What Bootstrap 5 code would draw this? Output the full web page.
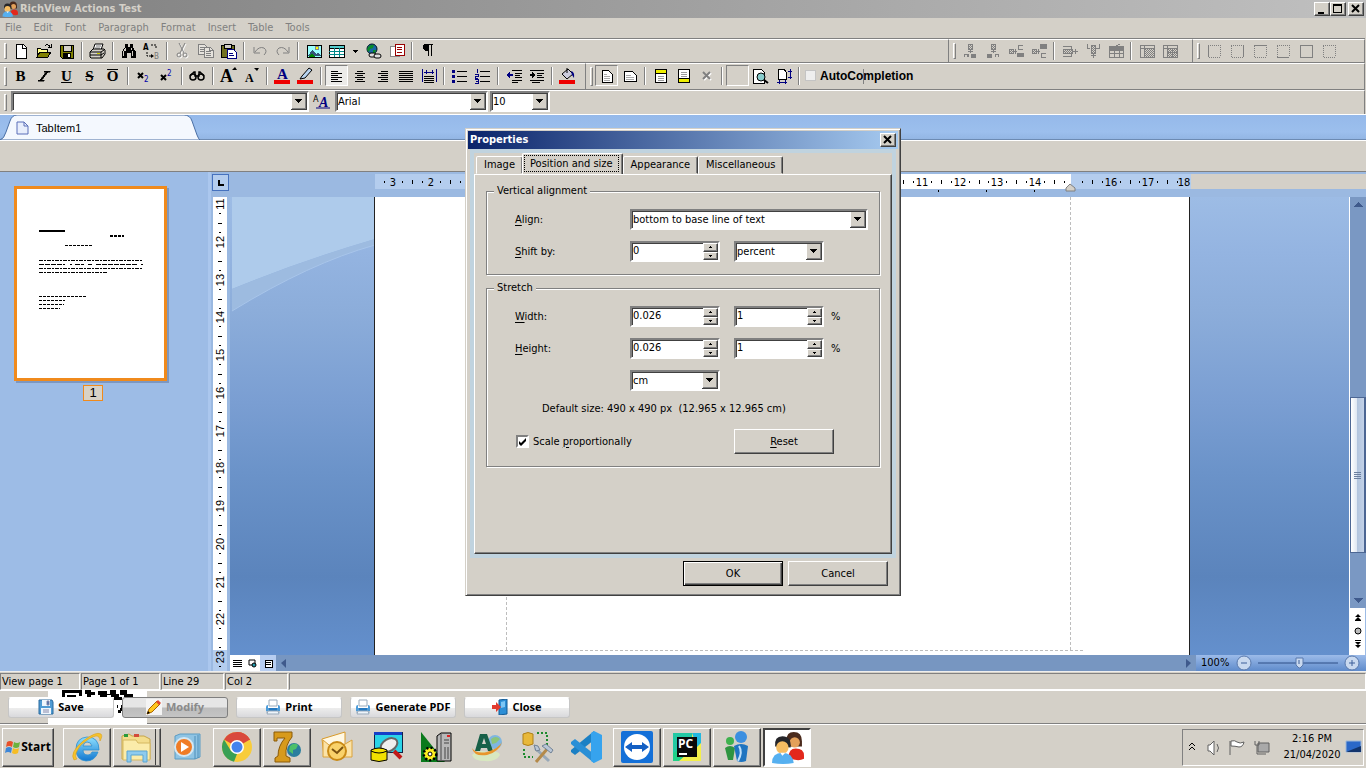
<!DOCTYPE html>
<html lang="en">
<head>
<meta charset="utf-8">
<meta name="viewport" content="width=device-width, initial-scale=1">
<title>RichView Actions Test</title>
<link href="https://cdn.jsdelivr.net/npm/bootstrap@5.3.0/dist/css/bootstrap.min.css" rel="stylesheet">
<style>
:root{--face:#d4d0c8;--shade:#808080;--dark:#404040}
html,body{height:100%}
body{font:11px/14px "DejaVu Sans Condensed","Noto Sans",sans-serif;color:#000;background:var(--face);overflow:hidden}
button,input,select{font:inherit;color:inherit;border-radius:0}
svg{display:block;flex:none}
.px{shape-rendering:crispEdges}
.raised{background:var(--face);border:1px solid;border-color:#fff var(--dark) var(--dark) #fff;box-shadow:inset -1px -1px var(--shade)}
.titlebar{height:18px;background:linear-gradient(90deg,#808080,#c0c0c0);color:#d4d0c8;font-weight:bold;padding:0 2px;gap:2px}
.winbtn{width:16px;height:14px;padding:0}
.menus{height:20px;gap:12px;padding-left:5px}
.menus a{color:#808080;text-decoration:none}
/* toolbars */
.band{border-top:1px solid var(--shade);margin-right:1px}
.strip{border-top:1px solid #fff;border-right:1px solid var(--shade);padding-left:9px;position:relative}
.strip::before{content:"";position:absolute;left:4px;top:3px;bottom:3px;width:3px;border:1px solid;border-color:#fff var(--shade) var(--shade) #fff}
.band1{height:24px}.band2{height:27px}.band3{height:25px}
.band2 .strip,.band3 .strip{padding-bottom:2px}
.cells{width:244px}.borders{width:172px}.formats{padding-right:6px}
.tool{width:23px;height:21px;padding:0;border:0;background:none;display:flex;align-items:center;justify-content:center;flex:none}
.tool svg{overflow:visible}
.tool.drop{width:14px}
.tool.down{border:1px solid;border-color:var(--shade) #fff #fff var(--shade);background:#ecebe8}
.tool.flat{background:var(--face)}
.vsep{width:2px;height:18px;margin:0 3px;border-left:1px solid var(--shade);border-right:1px solid #fff;flex:none}
.glyph{font-family:"Liberation Serif",serif;font-weight:bold;font-size:15px;line-height:16px}
.over{border-top:1px solid #000;line-height:12px}
.acheck{font:bold 12px/14px "Liberation Sans",sans-serif;position:relative}
.acheck::after{content:"";position:absolute;left:60px;top:0;width:1px;height:15px;background:#808080}
.acheck input{appearance:none;width:11px;height:11px;margin:0 4px 0 2px;border:1px solid #c4c4c4;background:#eee}
.stylebox{width:298px;margin-left:2px}.aabtn{margin:0 2px 0 1px}.fontbox{width:153px}.sizebox{width:60px;margin-left:2px}
/* sunken fields */
.well{border:2px solid;border-color:var(--shade) #fff #fff var(--shade);outline:0;background-color:#fff;box-shadow:inset 1px 1px var(--dark);height:21px}
select.well{appearance:none;padding:0 20px 0 1px;background-repeat:no-repeat;background-position:right 0 center;background-image:url("data:image/svg+xml,%3Csvg xmlns='http://www.w3.org/2000/svg' width='16' height='17' shape-rendering='crispEdges'%3E%3Crect width='16' height='17' fill='%23404040'/%3E%3Crect width='15' height='16' fill='%23fff'/%3E%3Crect x='1' y='1' width='14' height='15' fill='%23808080'/%3E%3Crect x='1' y='1' width='13' height='14' fill='%23d4d0c8'/%3E%3Cpath d='M4 6h7v1h-1v1h-1v1h-1v1h-1v-1h-1v-1h-1v-1h-1z'/%3E%3C/svg%3E")}
.spin input{border:0;background:none;outline:0;min-width:0;padding:0 0 2px 1px}
.spin button{width:15px;height:8px;flex:1;padding:0;display:flex;align-items:center;justify-content:center}
/* document tabs */
.doctabs{height:26px;background:linear-gradient(#95b9ea,#9cbfed 70%,#93b6e4);border-top:1px solid #fff;border-bottom:1px solid #6d8bb3}
.doctab{font:11px/14px "Liberation Sans",sans-serif;width:200px;height:25px;background:none;border:0;padding:0 0 0 16px;gap:6px;position:relative}
.doctab>svg:first-child{position:absolute;left:0;top:0}
.doctab>*{position:relative}
.blank{height:32px;border-top:1px solid #fff;border-bottom:1px solid var(--shade)}
/* work area */
.work{background:#9dbce6;min-height:0}
.pages{width:208px}
.split{width:3px;background:#abc7ee}
.thumb{border:3px solid #f08a1c;width:153px;height:195px;margin:14px 0 0 14px;background:#fff;box-shadow:2px 2px #7d97c0;padding:0}
.pageno{border:1px solid #f08a1c;background:#d8d2c6;width:20px;height:16px;margin:4px 0 0 83px;font:13px/14px "Liberation Sans",sans-serif;text-align:center}
.rulercol{width:19px;background:#9bb9e1}
.corner{width:17px;height:17px;margin:2px 0 6px 1px;border:1px solid #4672be;background:#b4cdee;padding:0;display:flex;align-items:center;justify-content:center}
.toprule{height:25px;padding:2px 0 0 145px;background:#9bb9e1}
.toprest{height:15px;background:var(--face)}
.canvas{min-height:0;background:linear-gradient(#9dbce5 0,#94b4e1 12%,#8cadda 25%,#7a9ed2 45%,#6b93c9 60%,#5b84bc 83%,#6490cd 100%);position:relative}
.swoosh{position:absolute;left:0;top:0}
.paper{width:816px;margin-left:144px;background:#fff;border-left:1px solid #222;border-right:1px solid #222;position:relative}
.textarea-guides{margin-left:131px;width:565px;border:dashed #bdbdbd;border-width:0 1px}
.bottom-guide{margin-left:115px;width:593px;height:5px;border-top:1px dashed #bdbdbd}
.vbar{width:17px;border-left:1px solid #fff;background:#7a98c3}
.vbar button{border:0;padding:0;background:none;height:15px;width:16px;display:flex;align-items:center;justify-content:center}
.vthumb{height:156px;margin-top:185px;border:1px solid #4c6693;border-right-width:2px;background:linear-gradient(90deg,#fff,#dfe7f2 45%,#b3c5de 50%,#c3d2e8)}
.vnav{background:#fff;width:16px;height:47px}
.hbar{height:16px;background:#7796c1}
.views{width:46px;background:#fff}
.views button,.hbar .arr{border:0;padding:0;background:none;width:15px;height:16px;display:flex;align-items:center;justify-content:center}
.views button.cur{background:#b7cdf0;width:16px}
.zoomer{width:170px;background:linear-gradient(#9cbbe9,#5f8bcb);padding-left:5px}
.status{height:19px;padding-top:1px;border-top:1px solid #eee}
.status div{border:1px solid;border-color:var(--shade) #fff #fff var(--shade);height:17px;margin-right:1px;padding-left:1px;line-height:16px}
.status .s1{width:80px}.status .s2{width:79px}.status .s3{width:63px}
.actions{height:34px;border-top:1px solid #fff;border-bottom:1px solid var(--shade);padding:6px 8px 0;gap:8px;position:relative}
.actions>.qr{position:absolute;left:48px;top:-1px}
.act{width:106px;height:21px;border:1px solid #c6c6c6;border-top-color:#fff;border-radius:3px;background:linear-gradient(#fff 50%,#ececec 55%,#d9d9dc);padding:0 0 2px;font:bold 11px/14px "Open Sans",sans-serif;position:relative;display:flex;align-items:center;justify-content:center;gap:4px}
.act:disabled{background:linear-gradient(#e6e6e6 45%,#bdbdbd 55%,#c4c4c4);border-color:#7f7f7f;color:#8a8a8a}
.taskbar{height:44px;border-top:1px solid #fff;padding:2px 2px 1px}
.start{width:52px;height:39px;padding:0;font:bold 12px/14px "Open Sans",sans-serif;margin-right:9px}
.task{width:48px;height:39px;padding:0;margin-right:2px;display:flex;align-items:center;justify-content:center;border:0;background:none}
.task.raised{background:var(--face);border:1px solid;border-color:#fff var(--dark) var(--dark) #fff}
.task.stack{box-shadow:inset -1px -1px #808080,inset -4px 0 #d4d0c8,inset -5px 0 #404040}
.task.on{background:#fff;border:2px solid;border-color:var(--dark) #fff #fff var(--dark)}
.tray{border:1px solid;border-color:var(--shade) #fff #fff var(--shade);height:37px;width:182px;line-height:16px}
/* dialog */
.dlg{position:absolute;left:465px;top:128px;width:436px;background:var(--face);border:1px solid;border-color:#d4d0c8 #404040 #404040 #d4d0c8;box-shadow:inset 1px 1px #fff,inset -1px -1px #808080;padding:2px}
.dlgtitle{height:18px;background:linear-gradient(90deg,#0a246a,#a6caf0);color:#fff;font-weight:bold;padding:0 2px}
.sheet{border:4px solid #c0d3df;margin:0 2px}
.tabrow{height:21px;padding:0 2px}
.ptab{border:1px solid;border-color:#fff var(--dark) transparent #fff;box-shadow:inset -1px 0 var(--shade);background:var(--face);height:18px;padding:0 7px;border-radius:2px 2px 0 0}
.ptab.cur{height:21px;padding:0;z-index:1;border-bottom:0;margin-left:-1px}
.ptab.cur span{display:block;border:1px dotted #000;margin:1px 3px 2px 1px;padding:0 5px;height:17px;line-height:15px}
.tabpage{border:1px solid;border-color:#fff var(--dark) var(--dark) #fff;box-shadow:inset -1px -1px var(--shade);height:380px;padding:9px 10px 0 11px}
.group{border:1px solid #808080;box-shadow:1px 1px #fff,inset 1px 1px #fff;margin:0 1px 6px 0;padding:11px 0 12px 28px;display:grid;grid-template-columns:101px 90px 90px auto;column-gap:14px;row-gap:11px;align-items:center}
.group legend{float:none;width:auto;font-size:11px;line-height:14px;height:14px;margin:0 0 0 -21px;padding:0 3px;background:var(--face)}
.group .wide{grid-column:2/5;width:238px}
.group .unit{grid-column:2}
.group u,.pbtn u{text-underline-offset:2px}
.pct{margin-left:-7px}
.defsize{grid-column:1/5;padding-left:27px;height:16px}
.scale{grid-column:1/3}
.dlgfoot{gap:5px;padding:3px 10px 7px}
.pbtn{width:100px;height:25px;padding:0}
.group .pbtn{grid-column:3}
.pbtn.default{border:1px solid #000;box-shadow:inset 1px 1px #fff,inset -1px -1px #404040,inset -2px -2px #808080}
.tick{appearance:none;width:13px;height:13px;margin:0 4px 0 1px;border:2px solid;border-color:#808080 #fff #fff #808080;background:#fff url("data:image/svg+xml,%3Csvg xmlns='http://www.w3.org/2000/svg' width='9' height='9'%3E%3Cpath d='M1 4l2 2 5-5v3L3 9 1 7z'/%3E%3C/svg%3E") center/9px no-repeat}
</style>
</head>
<body class="d-flex flex-column">
<svg width="0" height="0" class="position-absolute">
 <defs>
  <linearGradient id="gb" x1="0" y1="0" x2="0" y2="1"><stop offset="0" stop-color="#8fe0ff"/><stop offset="1" stop-color="#1177d0"/></linearGradient>
  <symbol id="people" viewBox="0 0 32 32"><path d="M15 9q0-8 7-8 8 0 8 9v5H17z" fill="#4a2a1c"/><circle cx="23" cy="11" r="5" fill="#e3a05a"/><path d="M17 26q0-9 7-9 8 0 8 7v3q-6 3-15-1z" fill="#e2281c"/><path d="M4 15q-1-10 7-10 9 0 8 11z" fill="#26262a"/><circle cx="11" cy="16" r="6" fill="#f6bd62"/><path d="M1 31q0-10 10-10t11 10q-10 2-21 0z" fill="#56b0f0"/><path d="M9 21l2 3 3-3z" fill="#fff"/></symbol>
  <symbol id="printer" viewBox="0 0 16 16"><path d="M4 1h8v6H4z" fill="#fff" stroke="#9ab"/><path d="M1 8q0-2 2-2v3h10V6q2 0 2 2v4H1z" fill="#4c9bd8"/><path d="M1 12h14v2H1z" fill="#b9c7d4"/><path d="M4 9h8v3H4z" fill="#2679c0"/><path d="M3 12h10l1 3H2z" fill="#eef4fa" stroke="#9ab"/></symbol>
  <pattern id="dots" width="2" height="2" patternUnits="userSpaceOnUse"><path d="M0 0h1v1H0zM1 1h1v1H1z" fill="#808080"/></pattern>
 </defs>
</svg>

<header class="titlebar d-flex align-items-center flex-shrink-0">
 <svg width="16" height="16"><use href="#people"/></svg>
 <span class="flex-grow-1">RichView Actions Test</span>
 <div class="d-flex"><button class="winbtn raised" aria-label="Minimize"><svg class="px" width="14" height="12"><path d="M3 9h6v2H3z"/></svg></button>
 <button class="winbtn raised" aria-label="Maximize"><svg class="px" width="14" height="12"><path d="M2 1h9v9H2zM3 3v6h7V3z" fill-rule="evenodd"/></svg></button></div>
 <button class="winbtn raised" aria-label="Close"><svg width="14" height="12"><path d="M3 2l7 7M10 2L3 9" stroke="#000" stroke-width="2"/></svg></button>
</header>
<nav class="menus d-flex align-items-center flex-shrink-0">
 <a href="#">File</a><a href="#">Edit</a><a href="#">Font</a><a href="#">Paragraph</a><a href="#">Format</a><a href="#">Insert</a><a href="#">Table</a><a href="#">Tools</a>
</nav>

<div class="band band1 d-flex flex-shrink-0">
 <div class="strip d-flex align-items-center flex-grow-1">
  <button class="tool" aria-label="New"><svg class="px" width="16" height="16"><path d="M3 1h7l3 3v11H3z" fill="#fff" stroke="#000"/><path d="M9 1v4h4" fill="none" stroke="#000"/></svg></button>
  <button class="tool" aria-label="Open"><svg class="px" width="16" height="16"><path d="M1 13V5h3l1 1h6v3" fill="#ff8" stroke="#000"/><path d="M1 14l3-5h11l-3 5z" fill="#808000" stroke="#000"/><path d="M9 3q3-3 5 1M12 4h3V1" fill="none" stroke="#000"/></svg></button>
  <button class="tool" aria-label="Save"><svg class="px" width="16" height="16"><path d="M1 2h13v13H3l-2-2z" fill="#808000" stroke="#000"/><path d="M4 2h8v6H4z" fill="#d4d0c8" stroke="#000"/><path d="M4 10h8v5H4z"/><path d="M9 11h2v3H9z" fill="#fff"/></svg></button>
  <span class="vsep"></span>
  <button class="tool" aria-label="Print"><svg width="17" height="16"><path d="M6 1h8l-2 6H4z" fill="#fff" stroke="#000"/><path d="M7 3h5M6 5h5" stroke="#777"/><path d="M1 9l3-3h11l1 1v4l-3 4H2l-1-1z" fill="#d4d0c8" stroke="#000"/><path d="M1 9h11l3-2M1 12h11v3M12 9v3l3-2" fill="none" stroke="#000"/><path d="M8 10h3v1H8z" fill="#cc0"/></svg></button>
  <span class="vsep"></span>
  <button class="tool" aria-label="Find"><svg class="px" width="16" height="16"><path d="M4 1h3v3h2V1h3v3l3 5v6h-5v-5H6v5H1V9l3-5z"/><path d="M4 5h1v3H3v5H2V9zM10 5h1v3h1v5h-1V9z" fill="#d4d0c8"/></svg></button>
  <button class="tool" aria-label="Replace"><svg width="17" height="17"><text x="0" y="7" font-size="8" font-weight="bold">A</text><text x="11" y="16" font-size="8" fill="#777">B</text><path d="M4 9v4h5M8 2h5v4" fill="none" stroke="#000" stroke-dasharray="2 1"/><path d="M8 11l3 2-3 2z"/></svg></button>
  <span class="vsep"></span>
  <button class="tool" aria-label="Cut"><svg width="16" height="16" fill="none" stroke="#fff"><path d="M5 1l5 10M11 1L6 11"/><circle cx="5" cy="13" r="2"/><circle cx="11" cy="13" r="2"/><g stroke="#808080"><path d="M4 0l5 10M10 0L5 10"/><circle cx="4" cy="12" r="2"/><circle cx="10" cy="12" r="2"/></g></svg></button>
  <button class="tool" aria-label="Copy"><svg class="px" width="17" height="16" fill="#e6e3dd" stroke="#808080"><path d="M1 1h6l2 2v8H1z"/><path d="M3 4h4M3 6h4M3 8h4"/><path d="M7 4h6l3 3v7H7z"/><path d="M9 8h5M9 10h5M9 12h5M12 4v3h4"/></svg></button>
  <button class="tool" aria-label="Paste"><svg class="px" width="17" height="16"><path d="M1 2h13v12H1z" fill="#707020" stroke="#000"/><path d="M4 1h7v4H4z" fill="#d4d0c8" stroke="#000"/><path d="M7 6h6l3 3v6H7z" fill="#fff" stroke="#000080"/><path d="M9 10h4M9 12h5" stroke="#000080"/></svg></button>
  <span class="vsep"></span>
  <button class="tool" aria-label="Undo"><svg width="16" height="16" fill="none" stroke="#808080"><path d="M3 9q4-6 9-4 4 3 0 7M2 4v6h6"/></svg></button>
  <button class="tool" aria-label="Redo"><svg width="16" height="16" fill="none" stroke="#808080"><path d="M13 9Q9 3 4 5q-4 3 0 7M14 4v6H8"/></svg></button>
  <span class="vsep"></span>
  <button class="tool" aria-label="Insert picture"><svg class="px" width="16" height="16"><path d="M1 2h14v12H1z" fill="#9ff" stroke="#000"/><path d="M2 13l4-6 4 4 2-2 3 4z" fill="#357"/><path d="M2 14l4-4 3 4z" fill="#080"/><circle cx="11" cy="5" r="2" fill="#ff0" stroke="#888"/></svg></button>
  <button class="tool" aria-label="Insert table"><svg class="px" width="17" height="16"><path d="M1 2h15v12H1z" fill="#fff" stroke="#000"/><path d="M1 2h15v3H1z" fill="#5cc" stroke="#000"/><path d="M1 8h15M1 11h15M6 5v9M11 5v9" stroke="#088"/></svg></button>
  <button class="tool drop" aria-label="Table menu"><svg class="px" width="5" height="3"><path d="M0 0h5v1H4v1H3v1H2V2H1V1H0z"/></svg></button>
  <button class="tool" aria-label="Insert link"><svg width="17" height="17"><circle cx="7" cy="6" r="5" fill="#1766a4" stroke="#012"/><path d="M3 4q3-3 6-2l-1 3-3 1-1 3-2-2zM8 7h3l-1 3H8z" fill="#0a8a2a"/><rect x="4" y="10" width="7" height="4" rx="2" fill="#ddd" stroke="#000"/><rect x="9" y="11" width="7" height="4" rx="2" fill="#ddd" stroke="#000"/></svg></button>
  <button class="tool" aria-label="Insert object"><svg class="px" width="16" height="16"><path d="M1 3h9v10H1z" fill="#fff" stroke="#888"/><path d="M6 1h9v11H6z" fill="#fff" stroke="#900"/><path d="M8 4h5M8 6h5M8 9h5" stroke="#900"/></svg></button>
  <span class="vsep"></span>
  <button class="tool" aria-label="Show marks"><svg class="px" width="12" height="14"><path d="M1 3q0-3 3-3h7v1h-1v11H9V1H7v11H6V7H4Q1 6 1 3z"/></svg></button>
 </div>
 <div class="strip cells d-flex align-items-center" id="cells"></div>
 <div class="strip borders d-flex align-items-center" id="borders"></div>
</div>

<div class="band band2 d-flex flex-shrink-0">
 <div class="strip formats d-flex align-items-center">
  <button class="tool glyph">B</button>
  <button class="tool" aria-label="Italic"><svg class="px" width="14" height="12"><path d="M7 1h6v1h-2L5 10h2v1H1v-1h2L9 2H7z" stroke="#000" stroke-width=".5"/></svg></button>
  <button class="tool glyph"><u>U</u></button>
  <button class="tool glyph"><s>S</s></button>
  <button class="tool glyph"><span class="over">O</span></button>
  <span class="vsep"></span>
  <button class="tool" aria-label="Subscript"><svg width="13" height="14"><path d="M1 4l5 5M6 4L1 9" stroke="#000" stroke-width="2"/><text x="7" y="13" font-size="8" fill="#00a">2</text></svg></button>
  <button class="tool" aria-label="Superscript"><svg width="13" height="14"><path d="M1 6l5 5M6 6l-5 5" stroke="#000" stroke-width="2"/><text x="7" y="7" font-size="8" fill="#00a">2</text></svg></button>
  <span class="vsep"></span>
  <button class="tool" aria-label="Hidden text"><svg width="17" height="12" fill="none" stroke="#000" stroke-width="1.500"><circle cx="4" cy="7" r="3"/><circle cx="12" cy="7" r="3"/><path d="M1 6l4-4h1v4h4V2h1l4 4"/></svg></button>
  <span class="vsep"></span>
  <button class="tool glyph" aria-label="Grow font"><svg width="18" height="18"><text x="0" y="15" font-size="18">A</text><path d="M12 3h5l-2-3z"/></svg></button>
  <button class="tool glyph" aria-label="Shrink font"><svg width="16" height="18"><text x="1" y="15" font-size="12">A</text><path d="M10 1h5l-2 3z"/></svg></button>
  <span class="vsep"></span>
  <button class="tool glyph" aria-label="Text color"><svg width="17" height="17"><text x="3" y="12" font-size="15" fill="#000080">A</text><path d="M0 13h16v4H0z" fill="#e00"/></svg></button>
  <button class="tool" aria-label="Highlight"><svg width="17" height="17"><path d="M5 9l7-8 3 2-7 8-5 1z" fill="#b8d4f0" stroke="#000"/><path d="M0 13h16v4H0z" fill="#e00"/></svg></button>
  <span class="vsep"></span>
  <button class="tool down" aria-label="Align left"><svg class="px" width="14" height="12" stroke="#000"><path d="M1 1h7M1 3h11M1 5h7M1 7h11M1 9h7M1 11h11"/></svg></button>
  <button class="tool" aria-label="Center"><svg class="px" width="14" height="12" stroke="#000"><path d="M4 1h6M2 3h10M4 5h6M2 7h10M4 9h6M2 11h10"/></svg></button>
  <button class="tool" aria-label="Align right"><svg class="px" width="14" height="12" stroke="#000"><path d="M5 1h7M2 3h10M5 5h7M2 7h10M5 9h7M2 11h10"/></svg></button>
  <button class="tool" aria-label="Justify"><svg class="px" width="14" height="12" stroke="#000"><path d="M0 1h14M0 3h14M0 5h14M0 7h14M0 9h14M0 11h14"/></svg></button>
  <button class="tool" aria-label="Distribute"><svg class="px" width="16" height="15"><path d="M1 1v13M15 1v13M3 4h10M5 2v4M11 2v4" stroke="#000080"/><path d="M3 8h10M3 10h10M3 12h10M3 14h10" stroke="#000"/></svg></button>
  <span class="vsep"></span>
  <button class="tool" aria-label="Bullets"><svg class="px" width="15" height="14"><path d="M0 1h3v3H0zM0 6h3v3H0zM0 11h3v3H0z" fill="#000080"/><path d="M5 2h10M5 7h10M5 12h10" stroke="#000"/></svg></button>
  <button class="tool" aria-label="Numbering"><svg class="px" width="15" height="14"><path d="M2 0v4M0 5h3v2H0v2h3M0 10h3v4H0M1 12h2" stroke="#000080" fill="none"/><path d="M5 2h10M5 7h10M5 12h10" stroke="#000"/></svg></button>
  <span class="vsep"></span>
  <button class="tool" aria-label="Outdent"><svg class="px" width="16" height="13"><path d="M0 6l4-3v2h3v2H4v2z" fill="#000080"/><path d="M6 1h10M9 4h7M9 6h5M9 8h7M6 11h10M6 13h6" stroke="#000"/></svg></button>
  <button class="tool" aria-label="Indent"><svg class="px" width="16" height="13"><path d="M6 6L3 3v2H1v2h2v2z"/><path d="M1 1h14M8 4h7M8 6h5M8 8h7M1 11h14M3 13h8" stroke="#000"/></svg></button>
  <span class="vsep"></span>
  <button class="tool" aria-label="Fill"><svg width="17" height="17"><path d="M3 7l6-5 5 5-6 5z" fill="#ccd" stroke="#000"/><path d="M8 6V1" stroke="#000"/><path d="M12 4q4 1 3 7l-2-3z" fill="#000080"/><path d="M0 13h16v4H0z" fill="#e00"/></svg></button>
 </div>
 <div class="strip d-flex align-items-center flex-grow-1">
  <button class="tool down flat" aria-label="Portrait"><svg class="px" width="12" height="14"><path d="M1 1h6l4 4v8H1z" fill="#fff" stroke="#000"/><path d="M3 5h3M3 7h6M3 9h6M3 11h6" stroke="#aaa"/></svg></button>
  <button class="tool" aria-label="Landscape"><svg class="px" width="14" height="12"><path d="M1 1h8l4 4v6H1z" fill="#fff" stroke="#000"/><path d="M3 5h5M3 7h8M3 9h8" stroke="#aaa"/></svg></button>
  <span class="vsep"></span>
  <button class="tool" aria-label="Header"><svg class="px" width="12" height="14"><path d="M0 0h12v14H0z"/><path d="M1 1h10v12H1z" fill="#fff"/><path d="M1 1h10v3H1z" fill="#ee0"/><path d="M1 4h10v1H1z"/><path d="M3 7h6M3 9h6M3 11h6" stroke="#999"/></svg></button>
  <button class="tool" aria-label="Footer"><svg class="px" width="12" height="14"><path d="M0 0h12v14H0z"/><path d="M1 1h10v12H1z" fill="#fff"/><path d="M1 10h10v3H1z" fill="#ee0"/><path d="M1 9h10v1H1z"/><path d="M3 3h6M3 5h6M3 7h6" stroke="#999"/></svg></button>
  <button class="tool" aria-label="Remove"><svg width="12" height="12"><path d="M3 3l7 7M10 3l-7 7" stroke="#fff" stroke-width="2"/><path d="M2 2l7 7M9 2L2 9" stroke="#808080" stroke-width="2"/></svg></button>
  <span class="vsep"></span>
  <button class="tool down flat" aria-label="View"></button>
  <button class="tool" aria-label="Preview"><svg width="17" height="16"><path d="M1 1h8l3 3v11H1z" fill="#fff" stroke="#000" class="px"/><circle cx="9" cy="9" r="4" fill="#8cc" stroke="#000"/><path d="M12 12l4 3" stroke="#000" stroke-width="2"/></svg></button>
  <button class="tool" aria-label="Page setup"><svg class="px" width="16" height="16"><path d="M2 1h6l2 3v7H2z" fill="#fff" stroke="#000"/><path d="M14 1v10M12 3h4M12 9h4M1 14h10M3 12v4M9 12v4" stroke="#000080"/></svg></button>
  <span class="vsep"></span>
  <label class="acheck d-flex align-items-center"><input type="checkbox">AutoCompletion</label>
 </div>
</div>

<div class="band band3 d-flex flex-shrink-0">
 <div class="strip d-flex align-items-center flex-grow-1">
  <select class="well stylebox" aria-label="Style"><option></option></select>
  <button class="tool aabtn" aria-label="Font"><svg width="17" height="15"><text x="0" y="8" font-size="9">A</text><text x="6" y="13" font-size="14" font-style="italic" font-weight="bold" font-family="Liberation Serif,serif" fill="#000080">A</text><path d="M3 14h14" stroke="#000080"/></svg></button>
  <select class="well fontbox" aria-label="Font name"><option>Arial</option></select>
  <select class="well sizebox" aria-label="Font size"><option>10</option></select>
 </div>
</div>

<div class="doctabs flex-shrink-0">
 <button class="doctab d-flex align-items-center"><svg width="200" height="25"><path d="M0 25Q4 24 6 17L10 6Q12 0 17 0H184Q190 0 192 6l5 14q2 5 3 5z" fill="#f4f8fe" stroke="#4a6fa5"/></svg><svg width="14" height="14"><path d="M1 1h7l4 4v8H1z" fill="#e8eefc" stroke="#5b6fb8"/><path d="M8 1v4h4" fill="none" stroke="#5b6fb8"/></svg><span>TabItem1</span></button>
</div>
<div class="blank flex-shrink-0"></div>

<main class="work d-flex flex-grow-1">
 <aside class="pages flex-shrink-0">
  <button class="thumb d-block" aria-label="Page 1"><svg class="px" width="147" height="189" stroke="#000"><path d="M22 42h26" stroke-width="2"/><path d="M93 47h14" stroke-width="2" stroke-dasharray="3 1"/><path d="M48 56h27" stroke-dasharray="3 1"/><path d="M22 71h104M22 79h104M22 83h69" stroke-dasharray="4 1 2 1"/><path d="M22 75h26M53 75h2M58 75h9M71 75h4M79 75h41M124 75h2" stroke-dasharray="5 1"/><path d="M22 107h48M22 111h26M22 115h25M22 119h21" stroke-dasharray="3 1"/></svg></button>
  <div class="pageno">1</div>
 </aside>
 <div class="split"></div>
 <div class="rulercol d-flex flex-column">
  <button class="corner flex-shrink-0" aria-label="Tab kind"><svg class="px" width="8" height="8"><path d="M1 1h2v4h4v2H1z"/></svg></button>
  <svg id="vrule" width="19" height="474" class="flex-shrink-1"></svg>
 </div>
 <section class="d-flex flex-column flex-grow-1" style="min-width:0">
  <div class="toprule d-flex"><svg id="hrule" width="816" height="23"></svg><div class="toprest flex-grow-1"></div></div>
  <div class="d-flex flex-grow-1" style="min-height:0">
   <div class="canvas flex-grow-1 d-flex">
    <svg class="swoosh" width="145" height="130"><path d="M2 0h143v42Q70 64 2 92z" fill="#aecbeb"/><path d="M145 42Q70 64 2 92v22Q80 66 145 48z" fill="#9dbbe0"/><path d="M2 114Q80 66 145 48" fill="none" stroke="#a8c5ea"/></svg>
    <div class="paper d-flex flex-column"><div class="textarea-guides flex-grow-1"></div><div class="bottom-guide"></div></div>
   </div>
   <div class="d-flex flex-column">
    <div class="vbar flex-grow-1 d-flex flex-column"><button aria-label="Scroll up"><svg class="px" width="9" height="5"><path d="M4 0h1v1h1v1h1v1h1v1h1v1H0V4h1V3h1V2h1V1h1z" fill="#3f5a8c"/></svg></button>
     <div class="vthumb d-flex align-items-center justify-content-center"><svg class="px" width="7" height="8"><path d="M0 1h7M0 3h7M0 5h7M0 7h7" stroke="#6c80a0"/></svg></div>
     <button class="mt-auto" aria-label="Scroll down"><svg class="px" width="9" height="5"><path d="M0 0h9v1H8v1H7v1H6v1H5v1H4V4H3V3H2V2H1V1H0z" fill="#3f5a8c"/></svg></button></div>
    <div class="vnav"><svg width="16" height="47"><path d="M6 9l3-3 3 3zM6 12l3-3 3 3zM6 34l3 3 3-3zM6 37l3 3 3-3zM6 32h6v1H6zM6 12h6v1H6z"/><circle cx="9" cy="23" r="3" fill="#bbb" stroke="#000"/></svg></div>
   </div>
  </div>
  <div class="hbar d-flex">
   <div class="views d-flex"><button aria-label="Draft view"><svg class="px" width="9" height="9" stroke="#000"><path d="M0 1h9M0 3h9M0 5h9M0 7h9"/></svg></button><button aria-label="Web view"><svg width="9" height="9"><path d="M1 1h6v5H1z" fill="#fff" stroke="#000"/><circle cx="6" cy="6" r="2" fill="#29a" stroke="#000"/></svg></button><button class="cur" aria-label="Print view"><svg class="px" width="9" height="9"><path d="M1 1h7v7H1z" fill="#fff" stroke="#000"/><path d="M2 3h5M2 5h5" stroke="#000"/></svg></button></div>
   <button class="arr" aria-label="Scroll left"><svg width="5" height="9"><path d="M5 0v9L0 4z" fill="#3f5a8c"/></svg></button><span class="flex-grow-1"></span>
   <button class="arr" aria-label="Scroll right"><svg width="5" height="9"><path d="M0 0v9l5-5z" fill="#3f5a8c"/></svg></button>
   <div class="zoomer d-flex align-items-center"><span>100%</span><svg width="130" height="16" class="ms-auto"><path d="M22 8h80" stroke="#2e4f86"/><g fill="#c9d9ef" stroke="#5878ac"><circle cx="8" cy="8" r="7"/><circle cx="116" cy="8" r="7"/><path d="M60 3h7v7l-3 3h-1l-3-3z"/></g><path d="M5 8h6M113 8h6M116 5v6M63 5v4" stroke="#3d5f99"/></svg></div>
  </div>
 </section>
</main>

<footer class="flex-shrink-0">
 <div class="status d-flex"><div class="s1">View page 1</div><div class="s2">Page 1 of 1</div><div class="s3">Line 29</div><div class="s3">Col 2</div><div class="flex-grow-1 me-0"></div></div>
 <div class="actions d-flex">
  <svg class="qr px" width="99" height="34"><path d="M0 0h99v34H0z" fill="#fff"/><path d="M14 0h20v6h-3V3H17v4h-3zM19 5h9v2h-9zM37 0h6v2h4v3h-4v2h-4V4h-2zM50 1h9v3h3V0h6v4h3v3h-8V5h-4v2h-7V5h-2zM72 0h7v4h6v3h-9V5h-4zM66 15h4v3h3v-3h3v6h-4v-3h-3v-3h-3zM70 20h3v3h-3zM66 7h8v3h-8z"/></svg>
  <button class="act"><svg width="16" height="16"><path d="M1 1h13l1 2v12H1z" fill="#4f9bd4" stroke="#2b6a9e"/><path d="M4 1h8v6H4zM3 9h10v6H3z" fill="#eef6fd"/><path d="M9 2h2v4H9zM5 11h6M5 13h6" fill="#36a" stroke="#88a"/></svg>Save</button>
  <button class="act" disabled><svg width="16" height="16"><path d="M0 0h16v16H0z" fill="#f4f4f4"/><path d="M1 15l2-5 8-8 3 3-8 8z" fill="#ffc71f" stroke="#a86400"/><path d="M10 3l2-2 3 3-2 2z" fill="#e0442e"/><path d="M1 15l1-3 2 2z"/></svg>Modify</button>
  <button class="act"><svg width="16" height="16"><use href="#printer"/></svg>Print</button>
  <button class="act"><svg width="16" height="16"><use href="#printer"/></svg>Generate PDF</button>
  <button class="act"><svg width="16" height="16"><path d="M7 1l8-1v15l-8 1z" fill="#2c8ed6" stroke="#135a94"/><path d="M9 3l4-1v6l-4 1z" fill="#7cc6f5"/><path d="M0 6h4V3l5 5-5 5v-3H0z" fill="#e23b30"/></svg>Close</button>
 </div>
 <div class="taskbar d-flex align-items-center">
  <button class="start raised d-flex align-items-center justify-content-center"><svg width="16" height="16"><path d="M2 3q3-2 6 0L7 8Q4 6 1 8z" fill="#e8502a"/><path d="M9 3q3 2 6 0l-1 5q-3 2-6 0z" fill="#6cb33e"/><path d="M1 9q3-2 6 0l-1 5q-3-2-6 0z" fill="#3c86d8"/><path d="M8 9q3 2 6 0l-1 5q-3 2-6 0z" fill="#f6bd25"/></svg>Start</button>
  <button class="task raised" aria-label="Internet Explorer"><svg width="32" height="32"><path d="M27 21q-3 9-12 9Q5 29 5 18T16 6q12 0 12 13H12q0 5 5 5 3 0 4-3zM12 15h9q-1-4-5-4-3 0-4 4z" fill="url(#gb)" stroke="#2b8fd0" stroke-width=".8" fill-rule="evenodd"/><path d="M3 29Q-2 22 12 10 25 0 30 3q2 2-1 7 0-5-4-5-6 1-15 9Q2 24 6 28z" fill="#f5c22e" stroke="#d89a10" stroke-width=".5"/></svg></button>
  <button class="task raised stack" aria-label="Explorer"><svg width="34" height="32"><path d="M2 5l7-2 3 2h12l6 3v20H2z" fill="#f3dd8c" stroke="#c6a548"/><path d="M4 3h4v3H4z" fill="#2a9a3c"/><path d="M14 3h5v3h-5z" fill="#d24a3a"/><path d="M3 9h13l2 3h12v17H3z" fill="#fbecaa" stroke="#d5b860"/><path d="M7 20h20v11h-4v-7H11v7H7z" fill="#8ecbee" stroke="#5aa5d2"/></svg></button>
  <button class="task" aria-label="Media Player"><svg width="32" height="30"><path d="M9 2h20v23l-5 2H4V4z" fill="#8fc4e4" stroke="#5b9cc4"/><path d="M24 4v23M27 3v23" stroke="#4f8eb8"/><circle cx="13" cy="15" r="9" fill="#f07c26" stroke="#d7e8f2" stroke-width="2"/><path d="M10 10l8 5-8 5z" fill="#fff"/></svg></button>
  <button class="task raised" aria-label="Chrome"><svg width="32" height="32"><circle cx="16" cy="16" r="15" fill="#f8cc3a"/><path d="M16 16L3 8.500A15 15 0 0 1 29 8.500z" fill="#d9493c"/><path d="M16 1a15 15 0 0 1 13 8H16z" fill="#d9493c"/><path d="M3 8.500L10 20l6 3-3 7.700A15 15 0 0 1 3 8.500z" fill="#39a055"/><circle cx="16" cy="16" r="7" fill="#fff"/><circle cx="16" cy="16" r="5.500" fill="#4583ee"/></svg></button>
  <button class="task raised" aria-label="Delphi 7"><svg width="32" height="32"><circle cx="23" cy="19" r="7" fill="#2a7e9e"/><path d="M19 15q4-4 8-1l-2 4-3 1v4l-4-3z" fill="#4cc06a"/><path d="M3 1h18v5q-7 8-6 19l4 2v4H4v-4l3-2q0-10 7-18H6v3H3z" fill="#d79a1c" stroke="#8a5a08"/></svg></button>
  <button class="task" aria-label="Outlook"><svg width="32" height="32"><path d="M1 8L24 1v24H3z" fill="#fff8e4" stroke="#d99a28"/><path d="M2 9l12 10L31 9v17H2z" fill="#fbe3a8" stroke="#dba23a"/><circle cx="16" cy="20" r="9" fill="#f9d26a" stroke="#c98a16" stroke-width="2"/><path d="M11 18l5 4 6-6" fill="none" stroke="#7a5210" stroke-width="2"/></svg></button>
  <button class="task" aria-label="Data explorer"><svg width="34" height="32"><path class="px" d="M4 1h28v20H4z" fill="#2ad4e8" stroke="#124"/><path class="px" d="M4 1h28v3H4z" fill="#1540c8"/><ellipse cx="19" cy="14" rx="9" ry="6" fill="#eee" stroke="#666" stroke-width="2" transform="rotate(-30 19 14)"/><path d="M24 20l7 7" stroke="#c01818" stroke-width="4"/><path d="M1 19q8-4 16 0v10q-8 3-16 0z" fill="#f2e000" stroke="#000"/><path d="M1 20q8 4 16 0" fill="none" stroke="#000"/></svg></button>
  <button class="task" aria-label="Server tool"><svg width="34" height="32"><path d="M1 1v30h24z" fill="#0a7a1c"/><path d="M17 5l4-3h10v28H17z" fill="#b8b8b8" stroke="#000"/><path d="M21 3v26M24 9h5M24 12h5M25 16v12M28 16v12" stroke="#444"/><path d="M27 4h3v2h-3z" fill="#d22"/><circle cx="10" cy="23" r="6" fill="#ffee20" stroke="#000" stroke-dasharray="2 2" stroke-width="3"/><circle cx="10" cy="23" r="5" fill="#ffee20"/><circle cx="10" cy="23" r="2" fill="#fff" stroke="#000"/></svg></button>
  <button class="task" aria-label="Android Studio"><svg width="34" height="32"><path d="M2 24q6-6 15-3 12-2 13 3-4 7-15 6Q4 30 2 24z" fill="#d8e8c0"/><circle cx="25" cy="11" r="7" fill="#7fb6e0"/><path d="M21 8q5-4 9 0l-4 4-4 1z" fill="#8cc47a"/><path d="M5 20L10 3h7l6 17h-5l-1-3h-6l-1 3zM12 13h4l-2-6z" fill="#176048" fill-rule="evenodd"/><path d="M2 17q4 6 15 4 11-3 15-10-3 10-15 13Q4 26 2 17z" fill="#e8962c"/></svg></button>
  <button class="task" aria-label="Database tools"><svg width="34" height="32"><path d="M3 3q5-3 10 0v10q-5 3-10 0z" fill="#e8b83a" stroke="#b08018"/><path d="M17 2h10v12M4 18v8h9" fill="none" stroke="#1e8a2e" stroke-width="2" stroke-dasharray="2 2"/><path d="M15 17l14 13" stroke="#98a8b8" stroke-width="3"/><path d="M28 17L16 31" stroke="#b48a4a" stroke-width="3"/><path d="M22 15l4-2 7 6-2 3-5-4zM14 14l4 1 2 4-4 1z" fill="#b9c6d6" stroke="#718296"/></svg></button>
  <button class="task" aria-label="Visual Studio Code"><svg width="34" height="34"><path d="M24 1v9L5 25l-4-3V20z" fill="#1c80c4"/><path d="M24 33v-9L5 9l-4 3v2z" fill="#2a8fd6"/><path d="M24 1l8 4v24l-8 4-3-2V3z" fill="#36a3ee"/></svg></button>
  <button class="task raised" aria-label="TeamViewer"><svg width="32" height="32"><rect width="32" height="32" rx="2" fill="#1470d8"/><circle cx="16" cy="16" r="13" fill="#fff"/><path d="M4 16l7-5v3h10v-3l7 5-7 5v-3H11v3z" fill="#1460c4"/></svg></button>
  <button class="task raised" aria-label="PyCharm"><svg width="28" height="28"><path d="M0 0h28v28H0z" fill="#20d088"/><path d="M18 0h10v28H6l16-14z" fill="#f4f04a"/><path d="M19 0h9v10l-4 4z" fill="#22b8e0"/><path d="M0 0h19v8L0 20z" fill="#22c9a4"/><path d="M4 4h20v20H4z" fill="#0a0a0a"/><text x="5" y="15" font-size="12" font-weight="bold" font-family="Open Sans,sans-serif" fill="#fff">PC</text><path d="M6 20h8v2H6z" fill="#fff"/></svg></button>
  <button class="task raised" aria-label="Messenger"><svg width="32" height="32"><circle cx="9" cy="10" r="4" fill="#3fb24e"/><path d="M4 17q5-4 10 0l-2 12H7z" fill="#2f9440"/><circle cx="20" cy="6" r="6" fill="#3c8fe0"/><path d="M13 15q7-4 14 0l-2 15q-5 2-9 0z" fill="#1f74c0"/><path d="M18 15q4 6-1 15" stroke="#bfe0fa" stroke-width="2" fill="none"/></svg></button>
  <button class="task on" aria-label="RichView Actions Test"><svg width="33" height="33"><use href="#people"/></svg></button>
  <div class="tray ms-auto d-flex align-items-center">
   <svg width="98" height="30" fill="none"><path d="M6 14l3-3 3 3M6 18l3-3 3 3" stroke="#000"/><g stroke="#606060"><path d="M25 13h2l4-4v14l-4-4h-2z" fill="#fff"/><path d="M34 12q3 4 0 8"/><path d="M47 9v14M48 9q4-1 6 1 3 2 7 0-1 5-5 5-4-1-8-1z" fill="#fff"/><path d="M75 11h11v9H75z" fill="#a9a9a9"/><path d="M74 22h9M72 9v4h4V9M74 13v9"/></g></svg>
   <div class="text-center flex-grow-1">2:16 PM<br>21/04/2020</div>
   <svg width="20" height="14"><path d="M3 1h15v11H3z" fill="#2b68c8" stroke="#9fb8d8"/><path d="M3 12l15-6v6z" fill="#12346c"/></svg>
  </div>
 </div>
</footer>

<div class="dlg" role="dialog" aria-labelledby="dlgname">
 <div class="dlgtitle d-flex align-items-center"><span id="dlgname" class="flex-grow-1">Properties</span><button class="winbtn raised" aria-label="Close dialog"><svg width="14" height="12"><path d="M3 2l7 7M10 2L3 9" stroke="#000" stroke-width="2"/></svg></button></div>
 <div class="sheet">
  <div class="tabrow d-flex align-items-end" role="tablist">
   <button class="ptab" role="tab">Image</button><button class="ptab cur" role="tab" aria-selected="true"><span>Position and size</span></button><button class="ptab" role="tab">Appearance</button><button class="ptab" role="tab">Miscellaneous</button>
  </div>
  <div class="tabpage">
   <fieldset class="group">
    <legend>Vertical alignment</legend>
    <label for="al"><u>A</u>lign:</label><select id="al" class="well wide"><option>bottom to base line of text</option></select>
    <label for="sh"><u>S</u>hift by:</label>
    <div class="well spin d-flex"><input id="sh" class="flex-grow-1" value="0"><div class="d-flex flex-column"><button class="raised" aria-label="Up"><svg class="px" width="3" height="2"><path d="M1 0h1v1h1v1H0V1h1z"/></svg></button><button class="raised" aria-label="Down"><svg class="px" width="3" height="2"><path d="M0 0h3v1H2v1H1V1H0z"/></svg></button></div></div>
    <select class="well" aria-label="Shift unit"><option>percent</option></select>
   </fieldset>
   <fieldset class="group">
    <legend>Stretch</legend>
    <label for="wd"><u>W</u>idth:</label>
    <div class="well spin d-flex"><input id="wd" class="flex-grow-1" value="0.026"><div class="d-flex flex-column"><button class="raised" aria-label="Up"><svg class="px" width="3" height="2"><path d="M1 0h1v1h1v1H0V1h1z"/></svg></button><button class="raised" aria-label="Down"><svg class="px" width="3" height="2"><path d="M0 0h3v1H2v1H1V1H0z"/></svg></button></div></div>
    <div class="well spin d-flex"><input id="wp" class="flex-grow-1" value="1"><div class="d-flex flex-column"><button class="raised" aria-label="Up"><svg class="px" width="3" height="2"><path d="M1 0h1v1h1v1H0V1h1z"/></svg></button><button class="raised" aria-label="Down"><svg class="px" width="3" height="2"><path d="M0 0h3v1H2v1H1V1H0z"/></svg></button></div></div>
    <label class="pct" for="wp">%</label>
    <label for="ht"><u>H</u>eight:</label>
    <div class="well spin d-flex"><input id="ht" class="flex-grow-1" value="0.026"><div class="d-flex flex-column"><button class="raised" aria-label="Up"><svg class="px" width="3" height="2"><path d="M1 0h1v1h1v1H0V1h1z"/></svg></button><button class="raised" aria-label="Down"><svg class="px" width="3" height="2"><path d="M0 0h3v1H2v1H1V1H0z"/></svg></button></div></div>
    <div class="well spin d-flex"><input id="hp" class="flex-grow-1" value="1"><div class="d-flex flex-column"><button class="raised" aria-label="Up"><svg class="px" width="3" height="2"><path d="M1 0h1v1h1v1H0V1h1z"/></svg></button><button class="raised" aria-label="Down"><svg class="px" width="3" height="2"><path d="M0 0h3v1H2v1H1V1H0z"/></svg></button></div></div>
    <label class="pct" for="hp">%</label>
    <select class="well unit" aria-label="Unit"><option>cm</option></select>
    <div class="defsize">Default size: 490 x 490 px &nbsp;(12.965 x 12.965 cm)</div>
    <label class="scale d-flex align-items-center"><input class="tick" type="checkbox" checked><span>Scale <u>p</u>roportionally</span></label>
    <button class="pbtn raised"><span><u>R</u>eset</span></button>
   </fieldset>
  </div>
 </div>
 <div class="d-flex justify-content-end dlgfoot"><button class="pbtn raised default">OK</button><button class="pbtn raised">Cancel</button></div>
</div>
<script src="https://cdn.jsdelivr.net/npm/bootstrap@5.3.0/dist/js/bootstrap.bundle.min.js"></script>
<script>
// disabled table-editing tools
const d='fill="url(#dots)" stroke="#808080"', s='fill="#808080"';
const cell=[
 ['Insert row above',`<path d="M6 1h4v5H6z" ${d}/><path d="M8 6v4M6 8h5M2 14v-3h3v3M6 14v-3" stroke="#808080" fill="none"/><path d="M9 11h5v4H9z" ${s}/>`],
 ['Insert row below',`<path d="M6 1h4v5H6z" ${d}/><path d="M8 6v4M6 8h5M10 14v-3h3v3" stroke="#808080" fill="none"/><path d="M2 11h5v4H2z" ${s}/>`],
 ['Insert column left',`<path d="M1 6h4v4H1z" ${d}/><path d="M5 8h4M7 6v5M15 2h-5v4h5" stroke="#808080" fill="none"/><path d="M9 10h7v4H9z" ${s}/>`],
 ['Insert column right',`<path d="M1 6h4v4H1z" ${d}/><path d="M5 8h4M7 6v5M15 10h-5v4h5" stroke="#808080" fill="none"/><path d="M9 1h7v5H9z" ${s}/>`],0,
 ['Delete row',`<path d="M1 6h9v4H1z" ${d}/><path d="M1 3h8v3M1 13h8v-3M10 8h6M13 6v5" stroke="#808080" fill="none"/>`],
 ['Delete column',`<path d="M6 2h4v8H6z" ${d}/><path d="M2 1v4h3M14 1v4h-3M8 10v5M6 12h5" stroke="#808080" fill="none"/>`],
 ['Delete table',`<path d="M1 3h15v4H1z" ${s}/><path d="M1 7h14v7H1zM1 10h14M6 7v7M11 7v7M8 3l4-2" stroke="#808080" fill="none"/>`],0,
 ['Merge cells',`<path d="M1 2h14v12H1zM1 5h14M5 2v12" stroke="#808080" fill="none"/><path d="M5 5h10v9H5z" ${d}/>`],
 ['Split cells',`<path d="M1 2h14v12H1zM1 5h14M5 2v12M10 5v9M5 9h10" stroke="#808080" fill="none"/><path d="M5 5h10v9H5z" ${d}/>`]];
const btn=(n,g)=>`<button class="tool" aria-label="${n}" disabled><svg class="px" width="16" height="16">${g}</svg></button>`;
cells.innerHTML=cell.map(c=>c?btn(...c):'<span class="vsep"></span>').join('');
const box='<path d="M2 2h12v12H2z" fill="none" stroke="#808080" stroke-dasharray="1 1"/>';
borders.innerHTML=[['Left border','M2 2v12'],['Right border','M14 2v12'],['Top border','M2 2h12'],['Bottom border','M2 14h12'],['All borders','M2 2h12v12H2z'],['No borders','']].map(([n,p])=>btn(n,box+`<path d="${p}" fill="none" stroke="#808080"/>`)).join('');

// rulers: one centimetre is 37.76 px, labels are written only where the ruler is uncovered
const cm=37.76, R=Math.round;
let h='<rect width="816" height="15" fill="#b4cdee"/><rect x="131" width="565" height="15" fill="#fff"/>';
for(let i=-3;i<=18;i++){
 const x=R(131.500+i*cm), n=Math.abs(i);
 if((i<-1||i>10)&&i!=15) h+=`<text x="${Math.min(x,809)}" y="12" font-size="11" text-anchor="middle">${n}</text>`;
 h+=`<path class="px" d="M${x-R(cm/4)} 7h1v2h-1zM${x+R(cm/4)} 7h1v2h-1zM${x+R(cm/2)} 6h1v4h-1z"/>`;
}
h+='<path d="M691 17v-3l4-4 5 4v3z" fill="#d4d0c8" stroke="#808080"/><path class="px" d="M563 16h1v2h-1zM611 16h1v2h-1zM659 16h1v2h-1z"/>';
hrule.innerHTML=h;
let v='<rect x="2" width="14" height="453" fill="#fff"/><rect x="2" y="453" width="14" height="21" fill="#b4cdee"/>';
for(let i=0;i<=12;i++){
 const y=R(7+i*cm);
 v+=`<text transform="translate(13 ${y}) rotate(-90)" font-size="11" font-family="Liberation Sans,sans-serif" text-anchor="middle">${11+i}</text><path class="px" d="M8 ${y+9}h2v1h-2zM7 ${y+19}h4v1h-4zM8 ${y+28}h2v1h-2z"/>`;
}
vrule.innerHTML=v;
</script>
</body>
</html>
